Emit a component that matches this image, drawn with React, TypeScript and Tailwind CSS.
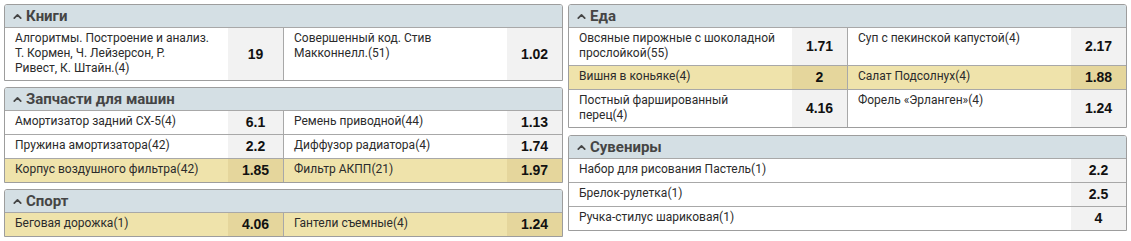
import { ChevronUp } from "lucide-react";

type Item = { name: string; odds: string; hl?: boolean };

const leftPanels: { title: string; rows: Item[][] }[] = [
  {
    title: "Книги",
    rows: [
      [
        { name: "Алгоритмы. Построение и анализ. Т. Кормен, Ч. Лейзерсон, Р.\nРивест, К. Штайн.(4)", odds: "19" },
        { name: "Совершенный код. Стив Макконнелл.(51)", odds: "1.02" },
      ],
    ],
  },
  {
    title: "Запчасти для машин",
    rows: [
      [
        { name: "Амортизатор задний CX-5(4)", odds: "6.1" },
        { name: "Ремень приводной(44)", odds: "1.13" },
      ],
      [
        { name: "Пружина амортизатора(42)", odds: "2.2" },
        { name: "Диффузор радиатора(4)", odds: "1.74" },
      ],
      [
        { name: "Корпус воздушного фильтра(42)", odds: "1.85", hl: true },
        { name: "Фильтр АКПП(21)", odds: "1.97", hl: true },
      ],
    ],
  },
  {
    title: "Спорт",
    rows: [
      [
        { name: "Беговая дорожка(1)", odds: "4.06", hl: true },
        { name: "Гантели съемные(4)", odds: "1.24", hl: true },
      ],
    ],
  },
];

const rightPanels: { title: string; rows: Item[][] }[] = [
  {
    title: "Еда",
    rows: [
      [
        { name: "Овсяные пирожные с шоколадной прослойкой(55)", odds: "1.71" },
        { name: "Суп с пекинской капустой(4)", odds: "2.17" },
      ],
      [
        { name: "Вишня в коньяке(4)", odds: "2", hl: true },
        { name: "Салат Подсолнух(4)", odds: "1.88", hl: true },
      ],
      [
        { name: "Постный фаршированный перец(4)", odds: "4.16" },
        { name: "Форель «Эрланген»(4)", odds: "1.24" },
      ],
    ],
  },
  {
    title: "Сувениры",
    rows: [
      [{ name: "Набор для рисования Пастель(1)", odds: "2.2" }],
      [{ name: "Брелок-рулетка(1)", odds: "2.5" }],
      [{ name: "Ручка-стилус шариковая(1)", odds: "4" }],
    ],
  },
];

function Cell({ item }: { item: Item }) {
  return (
    <div className={`flex flex-1 ${item.hl ? "bg-[#efe3ab]" : "bg-white"}`}>
      <div className="flex-1 whitespace-pre-line pl-[10px] pr-[17px] pt-[3px] pb-[4px] text-[12px] leading-[15px] text-[#2b2b2b]">
        {item.name}
      </div>
      <div
        className={`flex w-[55px] shrink-0 items-center justify-center font-['Liberation_Sans',Arial,sans-serif] text-[14px] font-bold text-[#111] ${
          item.hl ? "bg-[#e5d69c]" : "bg-[#f2f2f2]"
        }`}
      >
        {item.odds}
      </div>
    </div>
  );
}

function Panel({ title, rows }: { title: string; rows: Item[][] }) {
  return (
    <div className="overflow-hidden rounded-t-[3px] border border-[#9d9d9d]">
      <div className="flex h-[22px] items-center gap-[2px] bg-[#d4dfe4] pl-[6px] text-[15px] font-bold text-[#454545]">
        <ChevronUp size={13} strokeWidth={3.2} className="text-[#454545]" />
        {title}
      </div>
      {rows.map((row, i) => (
        <div key={i} className="flex min-h-[24px] divide-x divide-[#a8a8a8] border-t border-[#a8a8a8]">
          {row.map((item, j) => (
            <Cell key={j} item={item} />
          ))}
        </div>
      ))}
    </div>
  );
}

export default function App() {
  return (
    <div className="flex w-[1131px] gap-[5px] bg-white px-[4px] pt-[4px] font-['Roboto',sans-serif]">
      <div className="flex w-[559px] flex-col gap-[6px]">
        {leftPanels.map((p) => (
          <Panel key={p.title} {...p} />
        ))}
      </div>
      <div className="flex w-[559px] flex-col gap-[7px]">
        {rightPanels.map((p) => (
          <Panel key={p.title} {...p} />
        ))}
      </div>
    </div>
  );
}
